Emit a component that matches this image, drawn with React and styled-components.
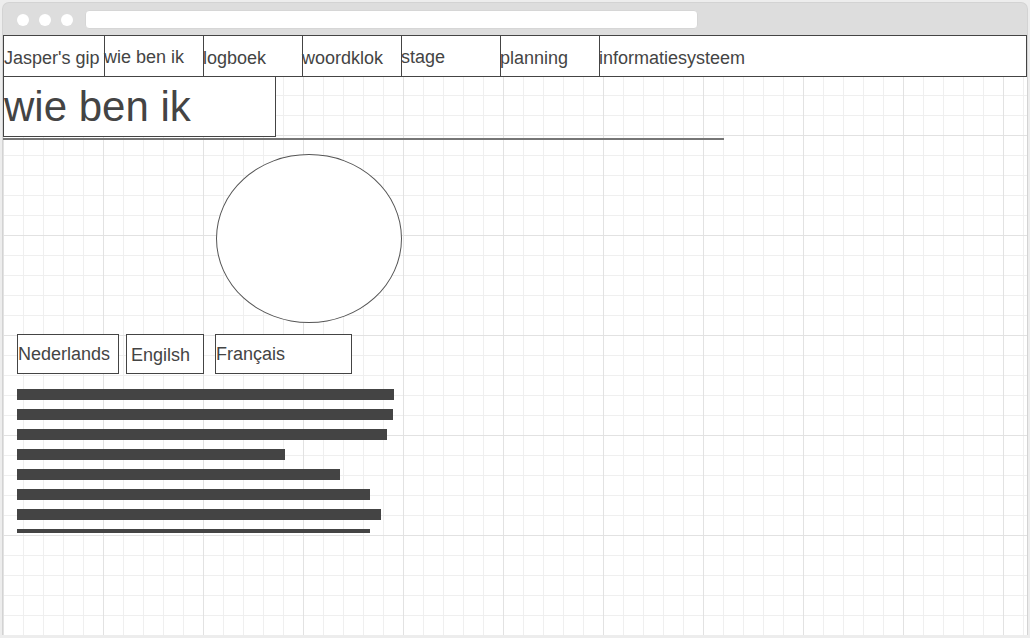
import React from "react";
import styled, { createGlobalStyle } from "styled-components";

const GlobalStyle = createGlobalStyle`
  html, body {
    margin: 0;
    padding: 0;
    background: #ededed;
    overflow: hidden;
  }
  body {
    font-family: "Liberation Sans", Arial, sans-serif;
    color: #444;
  }
  * {
    box-sizing: border-box;
  }
`;

const Window = styled.div`
  margin: 3px 0 0 3px;
  width: 1024px;
  height: 632px;
  display: flex;
  flex-direction: column;
  background: #dddddd;
  border-radius: 6px 6px 0 0;
  box-shadow: 0 0 0 1px #d3d3d3;
  overflow: hidden;
`;

const TitleBar = styled.div`
  height: 32px;
  flex-shrink: 0;
  display: flex;
  align-items: center;
  padding: 2px 0 0 14px;
`;

const Dot = styled.span`
  width: 12px;
  height: 12px;
  border-radius: 50%;
  background: #fff;
  margin-right: 10px;
`;

const AddressBar = styled.div`
  margin-left: 2px;
  width: 613px;
  height: 19px;
  background: #fff;
  border: 1px solid #d6d6d6;
  border-radius: 4px;
  margin-top: -2px;
`;

const Page = styled.div`
  flex: 1;
  overflow: hidden;
  background-color: #fff;
  background-image:
    linear-gradient(#e2e2e2 1px, transparent 1px),
    linear-gradient(90deg, #e2e2e2 1px, transparent 1px),
    linear-gradient(#efefef 1px, transparent 1px),
    linear-gradient(90deg, #efefef 1px, transparent 1px);
  background-size: 100px 100px, 100px 100px, 20px 20px, 20px 20px;
`;

const Nav = styled.nav`
  display: flex;
  height: 42px;
  border: 1px solid #444;
  background: #fff;
`;

const NavItem = styled.div`
  width: ${(p) => (p.w ? p.w + "px" : "auto")};
  flex: ${(p) => (p.w ? "0 0 auto" : "1")};
  border-right: ${(p) => (p.w ? "1px solid #444" : "none")};
  padding-top: ${(p) => (p.raised ? "11px" : "12px")};
  text-indent: ${(p) => (p.first ? "0" : "-1px")};
  font-size: 18px;
  color: #444;
  white-space: nowrap;
`;

const HeadingBox = styled.div`
  width: 273px;
  height: 60px;
  border: 1px solid #444;
  border-top: none;
  background: #fff;
  padding-top: 6px;
`;

const Title = styled.h1`
  margin: 0;
  font-size: 42px;
  font-weight: normal;
  color: #444;
  line-height: normal;
`;

const Rule = styled.div`
  margin-top: 1px;
  width: 721px;
  height: 2px;
  background: #767676;
`;

const Photo = styled.div`
  margin: 14px 0 0 213px;
  width: 186px;
  height: 169px;
  border: 1px solid #555;
  border-radius: 50%;
  background: #fff;
`;

const LangRow = styled.div`
  display: flex;
  margin-top: 11px;
  padding-left: 14px;
`;

const LangButton = styled.div`
  width: ${(p) => p.w}px;
  height: 40px;
  margin-left: ${(p) => p.ml || 0}px;
  border: 1px solid #444;
  background: #fff;
  display: flex;
  align-items: center;
  padding-left: ${(p) => p.pl || 0}px;
  padding-top: ${(p) => p.pt || 0}px;
  font-size: 18px;
  color: #444;
  white-space: nowrap;
`;

const TextLines = styled.div`
  margin: 15px 0 0 14px;
  height: 144px;
  overflow: hidden;
`;

const Line = styled.div`
  height: 11px;
  margin-bottom: 9px;
  background: #444;
`;

const navItems = [
  { label: "Jasper's gip", w: 101, first: true },
  { label: "wie ben ik", w: 99, raised: true },
  { label: "logboek", w: 99 },
  { label: "woordklok", w: 99 },
  { label: "stage", w: 99, raised: true },
  { label: "planning", w: 99 },
  { label: "informatiesysteem" },
];

const lineWidths = [377, 376, 370, 268, 323, 353, 364, 353];

const App = () => {
  return (
    <>
      <GlobalStyle />
      <Window>
        <TitleBar>
          <Dot />
          <Dot />
          <Dot />
          <AddressBar />
        </TitleBar>
        <Page>
          <Nav>
            {navItems.map((item) => (
              <NavItem
                key={item.label}
                w={item.w}
                raised={item.raised}
                first={item.first}
              >
                {item.label}
              </NavItem>
            ))}
          </Nav>
          <HeadingBox>
            <Title>wie ben ik</Title>
          </HeadingBox>
          <Rule />
          <Photo />
          <LangRow>
            <LangButton w={102}>Nederlands</LangButton>
            <LangButton w={78} ml={7} pl={4} pt={2}>
              Engilsh
            </LangButton>
            <LangButton w={137} ml={11}>
              Français
            </LangButton>
          </LangRow>
          <TextLines>
            {lineWidths.map((w, i) => (
              <Line key={i} style={{ width: w }} />
            ))}
          </TextLines>
        </Page>
      </Window>
    </>
  );
};

export default App;
